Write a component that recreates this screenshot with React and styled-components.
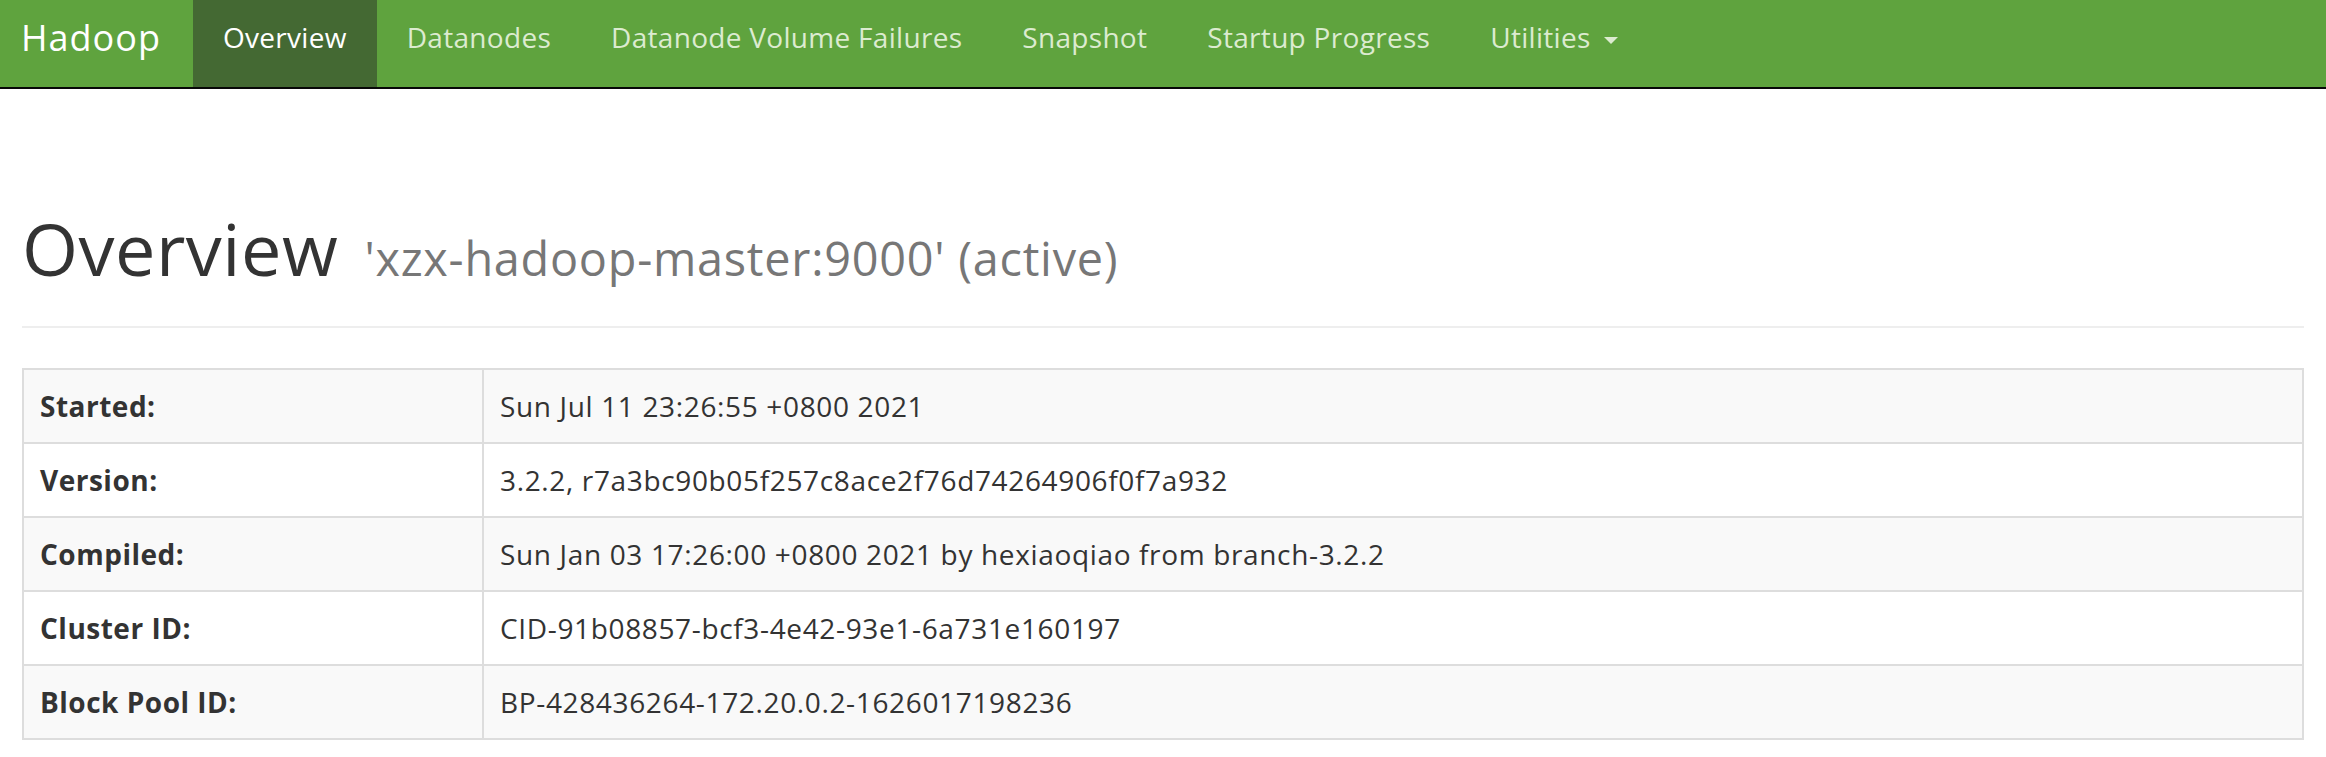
import React from "react";
import styled, { createGlobalStyle } from "styled-components";

const Global = createGlobalStyle`
  html, body { margin: 0; padding: 0; background: #fff; }
  body {
    font-family: "Open Sans", "Noto Sans", "Liberation Sans", sans-serif;
    color: #333;
    font-size: 28px;
  }
  * { box-sizing: border-box; }
`;

const Navbar = styled.nav`
  display: flex;
  align-items: stretch;
  height: 89px;
  background: #5fa33e;
  border-bottom: 2px solid #080808;
`;

const Brand = styled.a`
  display: block;
  padding: 18px 32px 0 21px;
  font-size: 36px;
  line-height: 40px;
  letter-spacing: 1px;
  color: #fff;
  text-decoration: none;
`;

const NavList = styled.ul`
  display: flex;
  margin: 0;
  padding: 0;
  list-style: none;
`;

const NavItem = styled.li`
  display: flex;
  background: ${(p) => (p.$active ? "#446933" : "transparent")};
`;

const NavLink = styled.a`
  display: flex;
  align-items: flex-start;
  padding: 17px 30px 0;
  font-size: 28px;
  line-height: 40px;
  letter-spacing: 0.3px;
  color: ${(p) => (p.$active ? "#fff" : "#dcebd0")};
  text-decoration: none;
  white-space: nowrap;
`;

const Caret = styled.span`
  display: inline-block;
  width: 0;
  height: 0;
  margin-left: 13px;
  margin-top: 20px;
  border-top: 7px solid #dcebd0;
  border-left: 7px solid transparent;
  border-right: 7px solid transparent;
`;

const Container = styled.main`
  padding: 0 22px;
`;

const PageHeader = styled.div`
  margin: 120px 0 40px;
  padding-bottom: 38px;
  border-bottom: 2px solid #eee;
`;

const Title = styled.h1`
  margin: 0;
  font-size: 72px;
  line-height: 79px;
  height: 79px;
  font-weight: 400;
  letter-spacing: 0.5px;
  color: #333;
`;

const Sub = styled.small`
  margin-left: 7px;
  font-size: 46.8px;
  line-height: 1;
  letter-spacing: 0.75px;
  color: #777;
  font-weight: 400;
`;

const Table = styled.table`
  width: 100%;
  table-layout: fixed;
  border-collapse: collapse;
  border: 2px solid #ddd;
`;

const KeyCol = styled.col`
  width: 460px;
`;

const Row = styled.tr`
  background: ${(p) => (p.$striped ? "#f9f9f9" : "#fff")};
`;

const Th = styled.th`
  padding: 16px;
  border: 2px solid #ddd;
  text-align: left;
  font-weight: 700;
  line-height: 40px;
  font-size: 28px;
  letter-spacing: 0.5px;
  vertical-align: top;
`;

const Td = styled.td`
  padding: 16px;
  border: 2px solid #ddd;
  line-height: 40px;
  font-size: 28px;
  letter-spacing: 0.65px;
  vertical-align: top;
`;

const navItems = [
  "Overview",
  "Datanodes",
  "Datanode Volume Failures",
  "Snapshot",
  "Startup Progress",
];

const rows = [
  ["Started:", "Sun Jul 11 23:26:55 +0800 2021"],
  ["Version:", "3.2.2, r7a3bc90b05f257c8ace2f76d74264906f0f7a932"],
  ["Compiled:", "Sun Jan 03 17:26:00 +0800 2021 by hexiaoqiao from branch-3.2.2"],
  ["Cluster ID:", "CID-91b08857-bcf3-4e42-93e1-6a731e160197"],
  ["Block Pool ID:", "BP-428436264-172.20.0.2-1626017198236"],
];

export default function App() {
  return (
    <>
      <Global />
      <Navbar>
        <Brand href="#">Hadoop</Brand>
        <NavList>
          {navItems.map((n, i) => (
            <NavItem key={n} $active={i === 0}>
              <NavLink href="#" $active={i === 0}>
                {n}
              </NavLink>
            </NavItem>
          ))}
          <NavItem>
            <NavLink href="#">
              Utilities
              <Caret />
            </NavLink>
          </NavItem>
        </NavList>
      </Navbar>
      <Container>
        <PageHeader>
          <Title>
            Overview <Sub>'xzx-hadoop-master:9000' (active)</Sub>
          </Title>
        </PageHeader>
        <Table>
          <colgroup>
            <KeyCol />
            <col />
          </colgroup>
          <tbody>
            {rows.map(([k, v], i) => (
              <Row key={k} $striped={i % 2 === 0}>
                <Th>{k}</Th>
                <Td>{v}</Td>
              </Row>
            ))}
          </tbody>
        </Table>
      </Container>
    </>
  );
}
